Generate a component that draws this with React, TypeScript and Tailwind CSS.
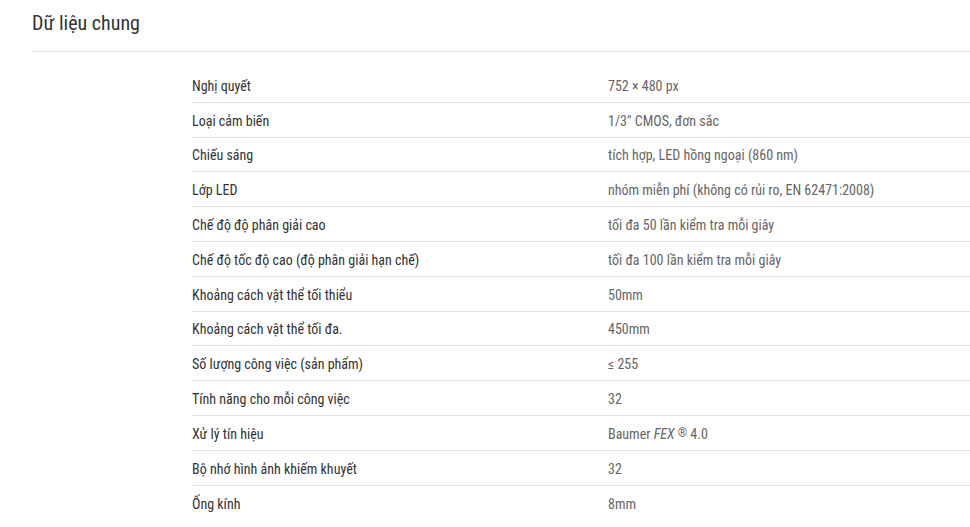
import React from "react";

const rows: [string, React.ReactNode][] = [
  ["Nghị quyết", "752 × 480 px"],
  ["Loại cảm biến", "1/3\" CMOS, đơn sắc"],
  ["Chiếu sáng", "tích hợp, LED hồng ngoại (860 nm)"],
  ["Lớp LED", "nhóm miễn phí (không có rủi ro, EN 62471:2008)"],
  ["Chế độ độ phân giải cao", "tối đa 50 lần kiểm tra mỗi giây"],
  ["Chế độ tốc độ cao (độ phân giải hạn chế)", "tối đa 100 lần kiểm tra mỗi giây"],
  ["Khoảng cách vật thể tối thiểu", "50mm"],
  ["Khoảng cách vật thể tối đa.", "450mm"],
  ["Số lượng công việc (sản phẩm)", "≤ 255"],
  ["Tính năng cho mỗi công việc", "32"],
  [
    "Xử lý tín hiệu",
    <>
      Baumer <i>FEX</i> <sup className="text-[12px] relative -top-[2px]">®</sup> 4.0
    </>,
  ],
  ["Bộ nhớ hình ảnh khiếm khuyết", "32"],
  ["Ống kính", "8mm"],
];

export default function App() {
  return (
    <div
      className="w-[970px] h-[527px] overflow-hidden bg-white pl-8"
      style={{ fontFamily: "Roboto, 'Noto Sans', sans-serif", fontStretch: "75%" }}
    >
      <div className="h-[52px] border-b border-[#e3e3e3] pt-[9px]">
        <h2 className="text-[20px] leading-[28px] text-[#333333]">Dữ liệu chung</h2>
      </div>
      <div className="ml-[160px] mt-[16px]">
        {rows.map(([label, value], i) => (
          <div
            key={i}
            className="grid grid-cols-[416px_1fr] h-[34.8px] border-b border-[#e3e3e3] last:border-b-0 items-center pt-[2px] text-[14px] leading-[20px]"
          >
            <div className="text-[#333333]">{label}</div>
            <div className="text-[#666666]">{value}</div>
          </div>
        ))}
      </div>
    </div>
  );
}
